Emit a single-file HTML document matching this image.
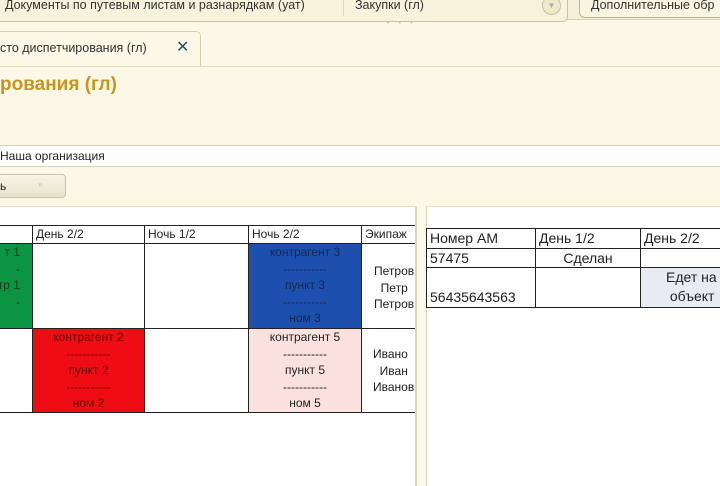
<!DOCTYPE html>
<html><head><meta charset="utf-8"><style>
*{margin:0;padding:0;box-sizing:border-box}
body{width:720px;height:480px;overflow:hidden;background:#fbf8e8;font-family:"Liberation Sans","DejaVu Sans",sans-serif;font-size:12px;color:#222;position:relative}
.a{position:absolute;white-space:nowrap}
.c{position:absolute;border:1px solid #222;font-size:12px;line-height:16.5px;text-align:center;overflow:hidden;white-space:nowrap}
.h{text-align:left;padding-left:3px;line-height:17px}
.r{font-size:14px;line-height:19px}
</style></head><body>
<!-- top bar -->
<div class="a" style="left:-10px;top:-6px;width:750px;height:26px;background:#f4f0d8;border-bottom:1px solid #d8d2b0"></div>
<div class="a" style="left:-10px;top:-8px;height:30px;border:1px solid #c9c3a0;border-radius:5px;background:#f6f2dc;width:578px"></div>
<div class="a" style="left:5px;top:-2px;font-size:12.5px;color:#333">Документы по путевым листам и разнарядкам (уат)</div>
<div class="a" style="left:343px;top:-2px;width:1px;height:18px;background:#ddd6b8"></div>
<div class="a" style="left:355px;top:-2px;font-size:12.5px;color:#333">Закупки (гл)</div>
<div class="a" style="left:542px;top:-4px;width:19px;height:19px;border:1px solid #c9c3a0;border-radius:50%;background:#efe9cc;color:#aaa;font-size:8px;text-align:center;line-height:18px">▼</div>
<div class="a" style="left:579px;top:-8px;width:160px;height:26px;border:1px solid #bdb79a;border-radius:6px;background:#f8f5e2"></div>
<div class="a" style="left:591px;top:-2px;font-size:12.5px;color:#333">Дополнительные обр</div>
<div class="a" style="left:387px;top:21px;font-size:6px;color:#bbb;letter-spacing:4px">• • •</div>
<!-- tab -->
<div class="a" style="left:-10px;top:31px;width:211px;height:36px;border:1px solid #d6cfa8;border-bottom:none;border-radius:0 5px 0 0;background:#fbf8e8"></div>
<div class="a" style="left:0;top:41px;font-size:12.5px;color:#333">сто диспетчирования (гл)</div>
<div class="a" style="left:176px;top:37px;font-size:16px;font-weight:bold;color:#2a4a70">✕</div>
<div class="a" style="left:0;top:66px;width:720px;height:1px;background:#e2dcc0"></div>
<!-- title -->
<div class="a" style="left:0;top:74px;font-size:19px;font-weight:bold;color:#c8961e">рования (гл)</div>
<!-- field -->
<div class="a" style="left:-5px;top:145px;width:730px;height:22px;background:#fff;border:1px solid #d8d2b8"></div>
<div class="a" style="left:0;top:149px;font-size:12px">Наша организация</div>
<!-- button -->
<div class="a" style="left:-10px;top:174px;width:76px;height:24px;border:1px solid #c7c1a5;border-radius:4px;background:linear-gradient(#f8f5e8,#e8e3cc)"></div>
<div class="a" style="left:0;top:179px;font-size:12px">ь</div>
<div class="a" style="left:38px;top:180px;font-size:8px;color:#bbb">»</div>
<!-- left panel -->
<div class="a" style="left:0;top:206px;width:417px;height:280px;background:#fff;border-right:2px solid #ddd6b8;border-top:1px solid #e4dec4;overflow:hidden">
<div class="c h" style="left:-5px;top:18px;width:38px;height:19px"></div>
<div class="c h" style="left:32px;top:18px;width:113px;height:19px">День 2/2</div>
<div class="c h" style="left:144px;top:18px;width:105px;height:19px">Ночь 1/2</div>
<div class="c h" style="left:248px;top:18px;width:114px;height:19px">Ночь 2/2</div>
<div class="c h" style="left:361px;top:18px;width:70px;height:19px">Экипаж</div>
<div class="c" style="left:-5px;top:36px;width:38px;height:86px;background:#0b9442;color:#1a3a20;text-align:right;padding-right:12px">т 1<br>-<br>тр 1<br>-</div>
<div class="c" style="left:32px;top:36px;width:113px;height:86px"></div>
<div class="c" style="left:144px;top:36px;width:105px;height:86px"></div>
<div class="c" style="left:248px;top:36px;width:114px;height:86px;background:#1d4fae;color:#15294a">контрагент 3<br>-----------<br>пункт 3<br>-----------<br>ном 3</div>
<div class="c" style="left:361px;top:36px;width:70px;height:86px;text-align:left;padding:19px 0 0 12px">Петров<br>&nbsp;&nbsp;Петр<br>Петров</div>
<div class="c" style="left:-5px;top:121px;width:38px;height:85px"></div>
<div class="c" style="left:32px;top:121px;width:113px;height:85px;background:#ee0d13;color:#6a0a0a">контрагент 2<br>-----------<br>пункт 2<br>-----------<br>ном 2</div>
<div class="c" style="left:144px;top:121px;width:105px;height:85px"></div>
<div class="c" style="left:248px;top:121px;width:114px;height:85px;background:#fbe1dd">контрагент 5<br>-----------<br>пункт 5<br>-----------<br>ном 5</div>
<div class="c" style="left:361px;top:121px;width:70px;height:85px;text-align:left;padding:17px 0 0 11px">Ивано<br>&nbsp;&nbsp;Иван<br>Иванов</div>
</div>
<!-- right panel -->
<div class="a" style="left:426px;top:206px;width:300px;height:280px;background:#fff;border-left:1px solid #d8d2b8;border-top:1px solid #e4dec4"></div>
<div class="c r h" style="left:426px;top:228px;width:110px;height:21px">Номер АМ</div>
<div class="c r h" style="left:535px;top:228px;width:106px;height:21px">День 1/2</div>
<div class="c r h" style="left:640px;top:228px;width:90px;height:21px">День 2/2</div>
<div class="c r h" style="left:426px;top:248px;width:110px;height:20px">57475</div>
<div class="c r" style="left:535px;top:248px;width:106px;height:20px">Сделан</div>
<div class="c r" style="left:640px;top:248px;width:90px;height:20px"></div>
<div class="c r h" style="left:426px;top:267px;width:110px;height:41px;padding-top:20px">56435643563</div>
<div class="c r" style="left:535px;top:267px;width:106px;height:41px"></div>
<div class="c r" style="left:640px;top:267px;width:90px;height:41px;background:#e9ebf4;text-align:left;padding-left:25px">Едет на<br>&nbsp;объект</div>
</body></html>
